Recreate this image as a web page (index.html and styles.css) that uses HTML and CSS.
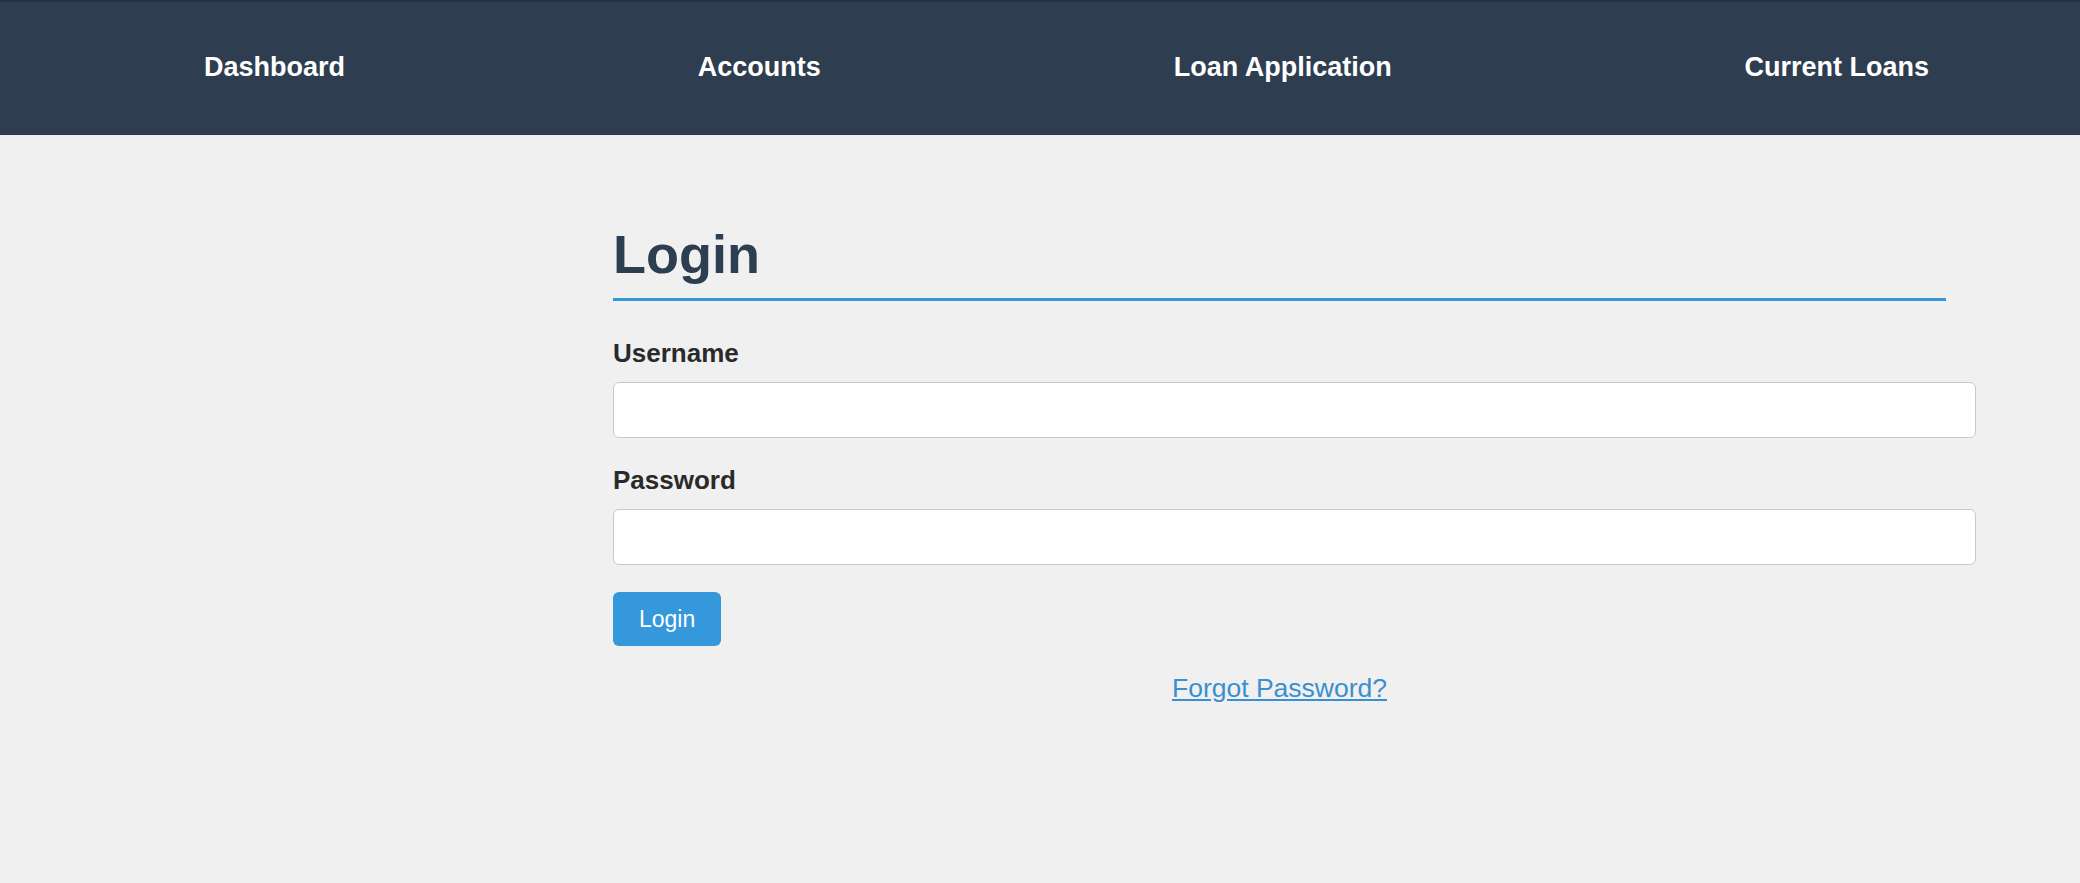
FILE: index.html
```html
<!DOCTYPE html>
<html lang="en">
<head>
<meta charset="utf-8">
<title>Login</title>
<link rel="stylesheet" href="styles.css">
</head>
<body>
<header class="topbar">
  <nav class="nav">
    <a class="nav-link" href="#">Dashboard</a>
    <a class="nav-link" href="#">Accounts</a>
    <a class="nav-link" href="#">Loan Application</a>
    <a class="nav-link" href="#">Current Loans</a>
  </nav>
</header>
<main class="main">
  <section class="login">
    <h2 class="login-title">Login</h2>
    <form class="login-form">
      <label class="field-label" for="username">Username</label>
      <input class="field-input" id="username" type="text">
      <label class="field-label" for="password">Password</label>
      <input class="field-input" id="password" type="password">
      <button class="btn" type="button">Login</button>
    </form>
    <p class="forgot"><a class="forgot-link" href="#">Forgot Password?</a></p>
  </section>
</main>
</body>
</html>
```

FILE: styles.css
```css
* { box-sizing: border-box; }

body {
  margin: 0;
  background: #f0f0f0;
  font-family: "Liberation Sans", Arial, sans-serif;
}

.topbar {
  height: 135px;
  background: #2e3e50;
  border-top: 2px solid #28313d;
}

.nav {
  height: 100%;
  display: flex;
  align-items: center;
  justify-content: space-between;
  padding: 0 151px 0 204px;
}

.nav-link {
  color: #ffffff;
  font-weight: bold;
  font-size: 27px;
  line-height: 30px;
  text-decoration: none;
  margin-top: -3px;
}

.main {
  padding-left: 613px;
}

.login {
  width: 1333px;
}

.login-title {
  margin: 88px 0 0;
  padding-bottom: 13px;
  font-size: 54px;
  line-height: 62px;
  font-weight: bold;
  color: #2c3e50;
  border-bottom: 3px solid #3498db;
}

.login-form {
  display: flex;
  flex-direction: column;
  align-items: flex-start;
  padding-top: 37px;
}

.field-label {
  display: block;
  font-size: 26px;
  line-height: 30px;
  font-weight: bold;
  color: #2a2a2a;
  margin-bottom: 14px;
}

.field-input {
  box-sizing: content-box;
  width: 100%;
  height: 26px;
  padding: 14px 14px;
  border: 1px solid #c9c9c9;
  border-radius: 6px;
  background: #ffffff;
  margin: 0 0 27px;
  font-family: inherit;
  font-size: 22px;
}

.btn {
  height: 54px;
  padding: 0 26px;
  border: none;
  border-radius: 6px;
  background: #3498db;
  color: #ffffff;
  font-family: inherit;
  font-size: 23px;
  line-height: 27px;
}

.forgot {
  margin: 27px 0 0;
  text-align: center;
  font-size: 26.5px;
  line-height: 30px;
}

.forgot-link {
  color: #3a8fd0;
  text-decoration: underline;
}
```
